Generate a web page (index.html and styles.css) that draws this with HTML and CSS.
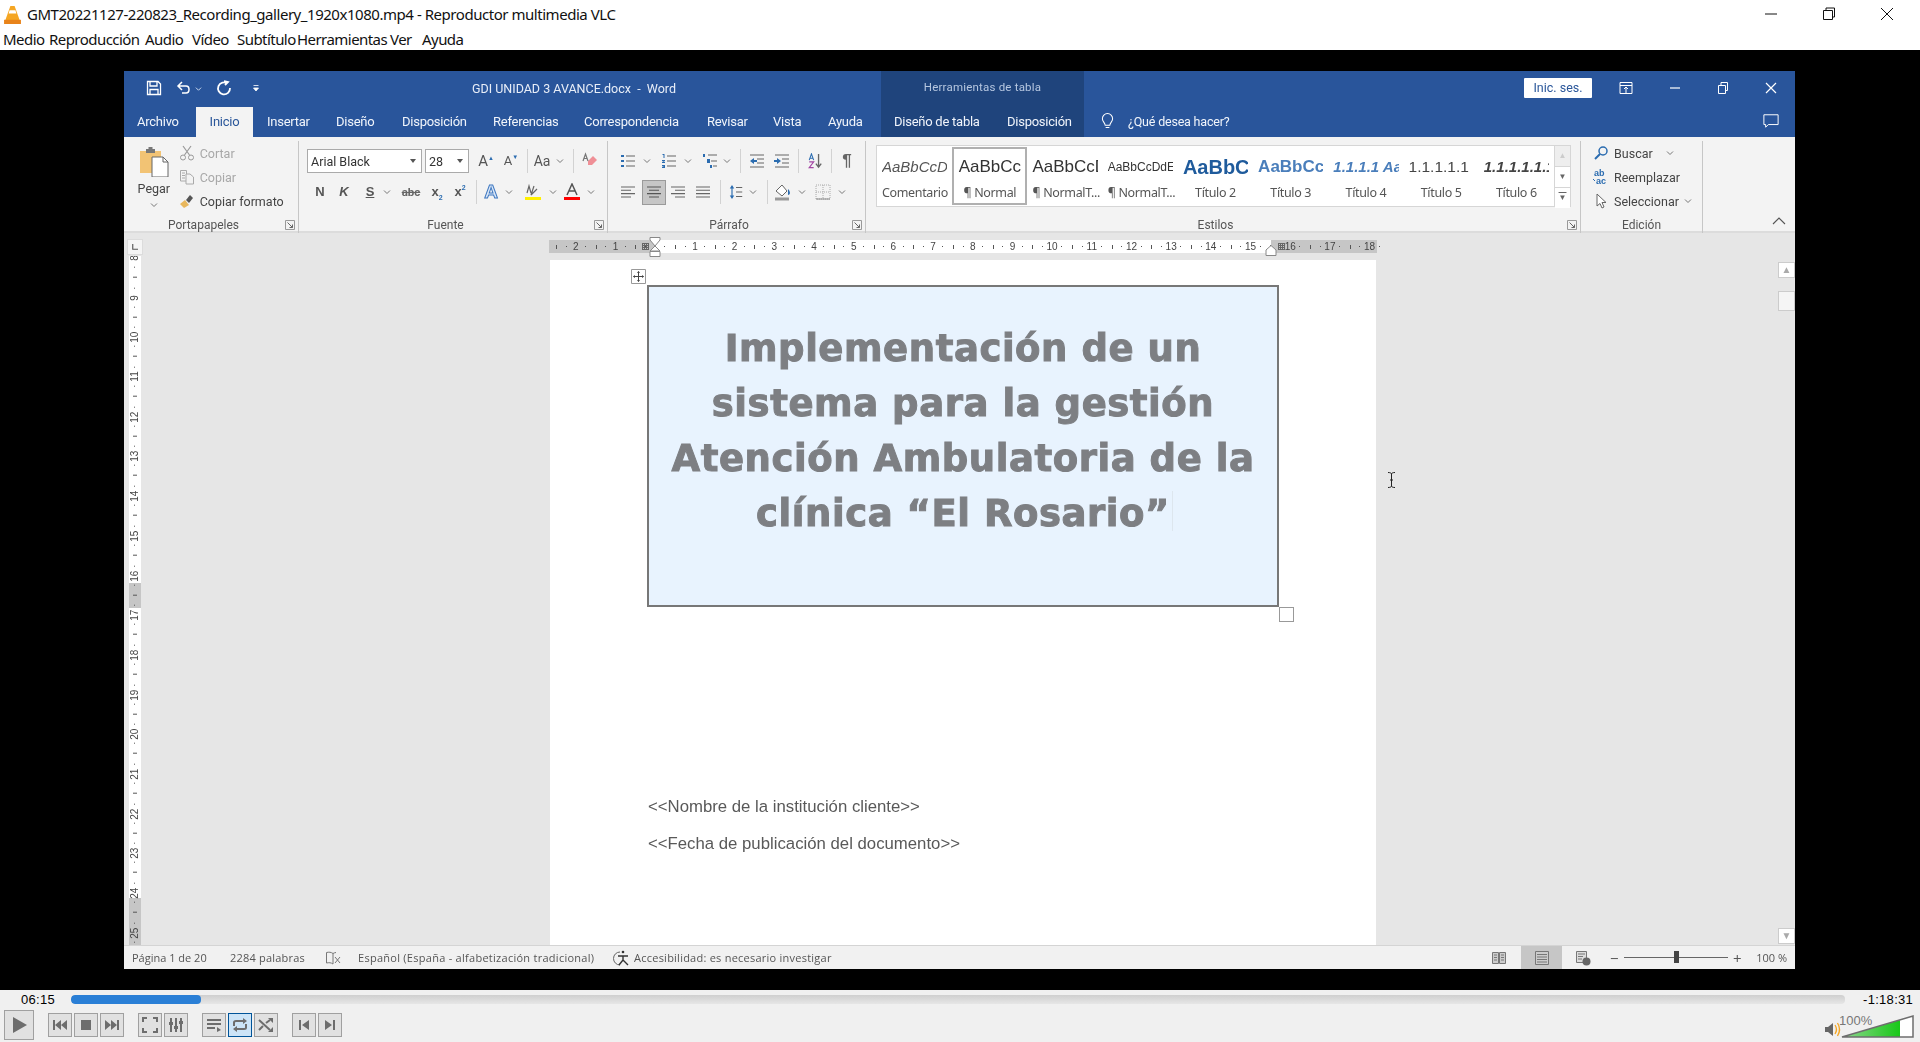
FILE: index.html
```html
<!DOCTYPE html>
<html lang="es">
<head>
<meta charset="utf-8">
<title>VLC</title>
<link rel="stylesheet" href="styles.css">
</head>
<body>
<svg class="defs" width="0" height="0">
<defs>
<symbol id="chev" viewBox="0 0 8 8"><path d="M1 2.500 4 5.500 7 2.500" fill="none" stroke="#777" stroke-width="1"/></symbol>
<symbol id="launch" viewBox="0 0 10 10"><path d="M.5 .5H9.500V9.500H.5Z" fill="none" stroke="#999"/><path d="M2.500 2.500 7.500 7.500M7.500 4.500V7.500H4.500" fill="none" stroke="#666"/></symbol>
<symbol id="bul" viewBox="0 0 16 16"><path d="M6 3H15M6 8H15M6 13H15" stroke="#666" stroke-width="1.200"/><path d="M1 2h3v2H1zM1 7h3v2H1zM1 12h3v2H1z" fill="#2b6cb0"/></symbol>
<symbol id="num" viewBox="0 0 16 16"><path d="M6 3H15M6 8H15M6 13H15" stroke="#666" stroke-width="1.200"/><path d="M1.500 1h2v4h-1V2h-1zM1 7h3v1L2.500 9H4v1H1V9l2-1H1zM1 12h3v3H1v-1h2v-.3H1.500v-.6H3V13H1z" fill="#2b6cb0"/></symbol>
<symbol id="multi" viewBox="0 0 16 16"><path d="M6 2H15M9 8H15M11 13H15" stroke="#666" stroke-width="1.100"/><path d="M1 1h2v3H1zM5 6h3v4H5zM8 12h2v3H8z" fill="#2b6cb0"/></symbol>
<symbol id="out" viewBox="0 0 16 16"><path d="M1 2H15M8 6H15M8 10H15M1 14H15" stroke="#666" stroke-width="1.200"/><path d="M1 8 5 5V7H8V9H5V11Z" fill="#2b6cb0"/></symbol>
<symbol id="ind" viewBox="0 0 16 16"><path d="M1 2H15M8 6H15M8 10H15M1 14H15" stroke="#666" stroke-width="1.200"/><path d="M7 8 3 5V7H0V9H3V11Z" fill="#2b6cb0"/></symbol>
<symbol id="sort" viewBox="0 0 16 18"><path d="M12 1V15M9 12 12 16 15 12" fill="none" stroke="#666" stroke-width="1.500"/><path d="M1.500 8 4 1 6.500 8M2.500 6H5.500" fill="none" stroke="#2b6cb0" stroke-width="1.200"/><path d="M1.500 10H6.500L1.500 16.500H6.500" fill="none" stroke="#a347a3" stroke-width="1.300"/></symbol>
<symbol id="alL" viewBox="0 0 16 16"><path d="M1 3H15M1 6.300H11M1 9.600H15M1 13H11" stroke="#666" stroke-width="1.100"/></symbol>
<symbol id="alC" viewBox="0 0 16 16"><path d="M1 3H15M3 6.300H13M1 9.600H15M3 13H13" stroke="#555" stroke-width="1.100"/></symbol>
<symbol id="alR" viewBox="0 0 16 16"><path d="M1 3H15M5 6.300H15M1 9.600H15M5 13H15" stroke="#666" stroke-width="1.100"/></symbol>
<symbol id="alJ" viewBox="0 0 16 16"><path d="M1 3H15M1 6.300H15M1 9.600H15M1 13H15" stroke="#666" stroke-width="1.100"/></symbol>
<symbol id="line" viewBox="0 0 16 18"><path d="M8 4H15M8 9H15M8 14H15" stroke="#666" stroke-width="1.200"/><path d="M3.500 3V15" stroke="#2b6cb0" stroke-width="1.300"/><path d="M1 5 3.500 1 6 5ZM1 13 3.500 17 6 13Z" fill="#2b6cb0"/></symbol>
<symbol id="shade" viewBox="0 0 18 18"><path d="M1 16H15" stroke="#999" stroke-width="3"/><path d="M2 8 8 2 13 8 8 13Z" fill="#fff" stroke="#666"/><path d="M14 6C17 9 16 12 14 12Z" fill="#2b6cb0"/></symbol>
<symbol id="border" viewBox="0 0 18 18"><path d="M2 2H16V16H2Z" fill="none" stroke="#aaa" stroke-dasharray="1 1"/><path d="M9 2V16M2 9H16" stroke="#aaa" stroke-dasharray="1 1"/><path d="M2 16H16" stroke="#888"/></symbol>
</defs>
</svg>

<header class="vtitle">
<svg class="cone" viewBox="0 0 16 18"><path d="M6 1H10L15 15H1Z" fill="#f5a623"/><path d="M5.200 5H10.800L11.600 8H4.400Z" fill="#fff"/><path d="M0 14H16V18H0Z" fill="#e8831a"/></svg>
<span class="vname">GMT20221127-220823_Recording_gallery_1920x1080.mp4 - Reproductor multimedia VLC</span>
<div class="wbtns">
<svg viewBox="0 0 14 14"><path d="M1 7H13" stroke="#111"/></svg>
<svg viewBox="0 0 14 14"><path d="M1.500 3.500H10.500V12.500H1.500ZM4 3.500V1H12.500V10H10.500" fill="none" stroke="#111"/></svg>
<svg viewBox="0 0 14 14"><path d="M1 1 13 13M13 1 1 13" stroke="#111"/></svg>
</div>
</header>
<nav class="vmenu"><span>Medio</span><span>Reproducción</span><span>Audio</span><span>Vídeo</span><span>Subtítulo</span><span>Herramientas</span><span>Ver</span><span>Ayuda</span></nav>

<main class="video">
<section class="word">
<div class="whead">
<div class="wh-left">
<div class="wtop">
<svg class="q q-save" viewBox="0 0 16 16"><path d="M1.500 1.500H12L14.500 4V14.500H1.500ZM4 1.500V6H11V1.500M4 14.500V9.500H12V14.500" fill="none" stroke="#fff" stroke-width="1.300"/></svg>
<svg class="q q-undo" viewBox="0 0 16 16"><path d="M6 2 2 6 6 10M2 6H10C14 6 14 13 10 13H6" fill="none" stroke="#fff" stroke-width="1.500"/></svg>
<svg class="q-ch" viewBox="0 0 8 8"><path d="M1 3 4 6 7 3" fill="none" stroke="#dce6f5"/></svg>
<svg class="q q-redo" viewBox="0 0 16 16"><path d="M8 1 12 2 9 5M11.500 3.500A6 6 0 1 0 14 8" fill="none" stroke="#fff" stroke-width="1.800"/></svg>
<svg class="q-more" viewBox="0 0 8 8"><path d="M1.500 1.500H6.500M1.500 4 4 7 6.500 4Z" fill="#fff" stroke="#fff" stroke-width=".8"/></svg>
<span class="docname">GDI UNIDAD 3 AVANCE.docx  -  Word</span>
</div>
<div class="tabs tabs-l">
<span class="tb t72">Archivo</span><span class="tb on">Inicio</span><span class="tb t70">Insertar</span><span class="tb t66">Diseño</span><span class="tb t91">Disposición</span><span class="tb t91">Referencias</span><span class="tb t123">Correspondencia</span><span class="tb t66">Revisar</span><span class="tb t55">Vista</span><span class="tb t66">Ayuda</span>
</div>
</div>
<div class="wh-ctx">
<div class="wtop ctx-title">Herramientas de tabla</div>
<div class="tabs"><span class="tb t113">Diseño de tabla</span><span class="tb t90">Disposición</span></div>
</div>
<div class="wh-right">
<div class="wtop wtop-r">
<span class="signin">Inic. ses.</span>
<svg class="wc" viewBox="0 0 16 16"><path d="M2 2.500H14V13.500H2ZM2 5.500H14M8 13V7M6 9 8 7 10 9" fill="none" stroke="#fff"/></svg>
<svg class="wc" viewBox="0 0 16 16"><path d="M3 8H13" stroke="#fff" stroke-width="1.200"/></svg>
<svg class="wc" viewBox="0 0 16 16"><path d="M3.500 5.500H10.500V13.500H3.500ZM6 5.500V2.500H12.500V10.500H10.500" fill="none" stroke="#fff"/></svg>
<svg class="wc" viewBox="0 0 16 16"><path d="M3 3 13 13M13 3 3 13" stroke="#fff" stroke-width="1.200"/></svg>
</div>
<div class="tabs tabs-r">
<svg class="bulb" viewBox="0 0 14 18"><path d="M4.500 13C4 10 1.500 9 1.500 6A5.500 5.500 0 0 1 12.500 6C12.500 9 10 10 9.500 13ZM5 15.500H9" fill="none" stroke="#fff" stroke-width="1.100"/></svg>
<span class="tell">¿Qué desea hacer?</span>
<svg class="cmt" viewBox="0 0 18 18"><path d="M1 2H17V13H6L3 16V13H1Z" fill="none" stroke="#fff" stroke-width="1.100"/></svg>
</div>
</div>
</div>

<div class="ribbon">
<div class="grp g-clip">
<div class="gbody clip">
<div class="paste">
<svg class="pasteic" viewBox="0 0 30 30"><path d="M1 4H22V26H1Z" fill="#f2c374"/><path d="M7 2H16V6H7Z" fill="#777"/><path d="M9.500 0H13.500V3H9.500Z" fill="#777"/><path d="M13 10H24L29 15V30H13Z" fill="#fff" stroke="#666"/><path d="M24 10V15H29" fill="none" stroke="#666"/></svg>
<span>Pegar</span>
<svg class="ch" viewBox="0 0 8 8"><use href="#chev"/></svg>
</div>
<div class="stack">
<div class="cmd off"><svg viewBox="0 0 16 16"><path d="M4 1 10.500 10M12 1 5.500 10" stroke="#999" fill="none" stroke-width="1.200"/><circle cx="4" cy="12.500" r="2.500" fill="none" stroke="#999"/><circle cx="12" cy="12.500" r="2.500" fill="none" stroke="#999"/></svg><span>Cortar</span></div>
<div class="cmd off"><svg viewBox="0 0 16 16"><path d="M1.500 1.500H7.500V12H1.500ZM3 4H6M3 6.500H6M3 9H6" stroke="#aaa" fill="none"/><path d="M7 5H11L14.500 8V15H7Z" fill="#f3f3f3" stroke="#aaa"/></svg><span>Copiar</span></div>
<div class="cmd"><svg viewBox="0 0 16 16"><path d="M1 11 6 7 10 12 5 15Z" fill="#e8b75c"/><path d="M7 7 11 2 14 5 10 10Z" fill="#555"/></svg><span>Copiar formato</span></div>
</div>
</div>
<div class="glabel"><i></i><span>Portapapeles</span><svg class="lau" viewBox="0 0 10 10"><use href="#launch"/></svg></div>
</div>

<div class="grp g-font">
<div class="gbody tools">
<div class="row">
<div class="combo c115"><span>Arial Black</span><b></b></div><i class="w3"></i>
<div class="combo c44"><span>28</span><b></b></div>
<i class="w2"></i><span class="s w30 big">A<sup>▲</sup></span><span class="s w20 mid">A<sup>▼</sup></span><i class="w6"></i><i class="sep"></i><span class="s w28 aa">Aa</span><svg class="ch" viewBox="0 0 8 8"><use href="#chev"/></svg><i class="w9"></i><i class="sep"></i>
<svg class="ic18 m6" viewBox="0 0 18 18"><path d="M8 9 13 4 17 8 12 13H8Z" fill="#ef8f96"/><path d="M3 9 5.500 2 8 9M4 6.500H7" fill="none" stroke="#777" stroke-width="1.200"/></svg>
</div>
<div class="row">
<i class="w2"></i><span class="s w22 tb-b">N</span><span class="s w26 tb-b it">K</span><span class="s w26 tb-b un">S</span><svg class="ch" viewBox="0 0 8 8"><use href="#chev"/></svg><i class="w4"></i>
<span class="s w32 abc">abc</span><span class="s w20 tb-b x">x<sub>2</sub></span><span class="s w26 tb-b x">x<sup>2</sup></span><i class="w3"></i><i class="sep"></i>
<span class="s w28 fx">A</span><svg class="ch" viewBox="0 0 8 8"><use href="#chev"/></svg><i class="w2"></i>
<i class="w2"></i><svg class="w32 ic18h" viewBox="0 0 18 18"><path d="M3 10 5 3 7 10M10 3 7 12 13 6" fill="none" stroke="#666" stroke-width="1.200"/><path d="M1 14H17V17H1Z" fill="#fff000"/></svg><svg class="ch" viewBox="0 0 8 8"><use href="#chev"/></svg>
<svg class="w30 ic18h" viewBox="0 0 18 18"><path d="M4 12 9 1 14 12M6 8H12" fill="none" stroke="#555" stroke-width="1.500"/><path d="M1 14H17V17H1Z" fill="#f00"/></svg><svg class="ch" viewBox="0 0 8 8"><use href="#chev"/></svg>
</div>
</div>
<div class="glabel"><i></i><span>Fuente</span><svg class="lau" viewBox="0 0 10 10"><use href="#launch"/></svg></div>
</div>

<div class="grp g-para">
<div class="gbody tools">
<div class="row">
<i class="w12"></i><svg class="ic" viewBox="0 0 16 16"><use href="#bul"/></svg><i class="w7"></i><svg class="ch" viewBox="0 0 8 8"><use href="#chev"/></svg>
<i class="w10"></i><svg class="ic" viewBox="0 0 16 16"><use href="#num"/></svg><i class="w7"></i><svg class="ch" viewBox="0 0 8 8"><use href="#chev"/></svg>
<i class="w10"></i><svg class="ic" viewBox="0 0 16 16"><use href="#multi"/></svg><i class="w5"></i><svg class="ch" viewBox="0 0 8 8"><use href="#chev"/></svg>
<i class="w9"></i><i class="sep"></i><i class="w8"></i><svg class="ic" viewBox="0 0 16 16"><use href="#out"/></svg><i class="w9"></i><svg class="ic" viewBox="0 0 16 16"><use href="#ind"/></svg>
<i class="w8"></i><i class="sep"></i><i class="w8"></i><svg class="ic" viewBox="0 0 16 18"><use href="#sort"/></svg><i class="w8"></i><i class="sep"></i>
<span class="s w30 pil">¶</span>
</div>
<div class="row">
<i class="w12"></i><svg class="ic" viewBox="0 0 16 16"><use href="#alL"/></svg><i class="w6"></i><span class="active"><svg class="ic" viewBox="0 0 16 16"><use href="#alC"/></svg></span>
<i class="w4"></i><svg class="ic" viewBox="0 0 16 16"><use href="#alR"/></svg><i class="w9"></i><svg class="ic" viewBox="0 0 16 16"><use href="#alJ"/></svg>
<i class="w9"></i><i class="sep"></i><i class="w7"></i><svg class="ic" viewBox="0 0 16 18"><use href="#line"/></svg><i class="w5"></i><svg class="ch" viewBox="0 0 8 8"><use href="#chev"/></svg>
<i class="w10"></i><i class="sep"></i><i class="w6"></i><svg class="ic18" viewBox="0 0 18 18"><use href="#shade"/></svg><i class="w6"></i><svg class="ch" viewBox="0 0 8 8"><use href="#chev"/></svg>
<i class="w8"></i><svg class="ic18" viewBox="0 0 18 18"><use href="#border"/></svg><i class="w6"></i><svg class="ch" viewBox="0 0 8 8"><use href="#chev"/></svg>
</div>
</div>
<div class="glabel"><i></i><span>Párrafo</span><svg class="lau" viewBox="0 0 10 10"><use href="#launch"/></svg></div>
</div>

<div class="grp g-styles">
<div class="gbody gal-wrap">
<div class="gallery">
<div class="gitems">
<div class="gi"><p class="p-com">AaBbCcDd</p><span>Comentario</span></div>
<div class="gi sel"><p class="p-nor">AaBbCc</p><span>¶ Normal</span></div>
<div class="gi"><p class="p-nor">AaBbCcDd</p><span>¶ NormalT...</span></div>
<div class="gi"><p class="p-sm">AaBbCcDdE</p><span>¶ NormalT...</span></div>
<div class="gi"><p class="p-t2">AaBbCc</p><span>Título 2</span></div>
<div class="gi"><p class="p-t3">AaBbCcD</p><span>Título 3</span></div>
<div class="gi"><p class="p-t4">1.1.1.1 AaB</p><span>Título 4</span></div>
<div class="gi"><p class="p-t5">1.1.1.1.1</p><span>Título 5</span></div>
<div class="gi"><p class="p-t6">1.1.1.1.1.1</p><span>Título 6</span></div>
</div>
<div class="gscroll"><span class="dis">▲</span><span>▼</span><span class="more">▼</span></div>
</div>
</div>
<div class="glabel"><i></i><span>Estilos</span><svg class="lau" viewBox="0 0 10 10"><use href="#launch"/></svg></div>
</div>

<div class="grp g-edit">
<div class="gbody stack-e">
<div class="cmd"><svg viewBox="0 0 16 16"><circle cx="10" cy="6" r="4" fill="none" stroke="#2b6cb0" stroke-width="1.500"/><path d="M7 9 2 14" stroke="#2b6cb0" stroke-width="2"/></svg><span>Buscar</span><svg class="ch chm" viewBox="0 0 8 8"><use href="#chev"/></svg></div>
<div class="cmd"><svg viewBox="0 0 16 16"><text x="1" y="7" class="ab">ab</text><text x="3" y="15" class="ac">ac</text><path d="M0 10 2 12" stroke="#2b6cb0"/></svg><span>Reemplazar</span></div>
<div class="cmd"><svg viewBox="0 0 16 16"><path d="M4 1V13L7 10.500 9 15 11 14 9 9.500H13Z" fill="#fff" stroke="#666"/></svg><span>Seleccionar</span><svg class="ch" viewBox="0 0 8 8"><use href="#chev"/></svg></div>
</div>
<div class="glabel glabel-e"><span>Edición</span></div>
</div>

<div class="rib-end"><svg viewBox="0 0 14 8"><path d="M1 7 7 1 13 7" fill="none" stroke="#555" stroke-width="1.100"/></svg></div>
</div>

<div class="doc">
<aside class="vside">
<div class="corner"><svg viewBox="0 0 8 8"><path d="M1 0V7H8" fill="none" stroke="#555" stroke-width="1.500"/></svg></div>
<div class="vr">
<span>8</span><span>9</span><span>10</span><span>11</span><span>12</span><span>13</span><span>14</span><span>15</span><span>16</span><span>17</span><span>18</span><span>19</span><span>20</span><span>21</span><span>22</span><span>23</span><span>24</span><span>25</span>
</div>
</aside>
<div class="pagecol">
<div class="hr">
<span>2</span><span>1</span><span></span><span>1</span><span>2</span><span>3</span><span>4</span><span>5</span><span>6</span><span>7</span><span>8</span><span>9</span><span>10</span><span>11</span><span>12</span><span>13</span><span>14</span><span>15</span><span>16</span><span>17</span><span>18</span>
<i class="tcol tcol-l"></i><i class="tcol tcol-r"></i>
<svg class="indent" viewBox="0 0 12 20"><path d="M1 .5H11V3L6 9 1 3ZM6 9 11 14H1Z" fill="#fff" stroke="#888"/><path d="M1 14.500H11V19.500H1Z" fill="#fff" stroke="#888"/></svg>
<svg class="rindent" viewBox="0 0 12 11"><path d="M6 .5 11 5V10.500H1V5Z" fill="#fff" stroke="#888"/></svg>
</div>
<article class="page">
<div class="titlebox">
<svg class="mv" viewBox="0 0 15 15"><path d="M.5 .5H14.500V14.500H.5Z" fill="#fff" stroke="#999"/><path d="M7.500 2.500V12.500M2.500 7.500H12.500" stroke="#444"/><path d="M6 4 7.500 2 9 4ZM6 11 7.500 13 9 11ZM4 6 2 7.500 4 9ZM11 6 13 7.500 11 9Z" fill="#444"/></svg>
<h1>Implementación de un<br>sistema para la gestión<br>Atención Ambulatoria de la<br>clínica “El Rosario”</h1>
<i class="caret"></i>
<i class="rs"></i>
</div>
<p class="ph ph1">&lt;&lt;Nombre de la institución cliente&gt;&gt;</p>
<p class="ph">&lt;&lt;Fecha de publicación del documento&gt;&gt;</p>
<svg class="ibeam" viewBox="0 0 9 16"><path d="M1 .5C3 .5 4.500 1 4.500 2V14C4.500 15 3 15.500 1 15.500M8 .5C6 .5 4.500 1 4.500 2M4.500 14C4.500 15 6 15.500 8 15.500M3 8H6" fill="none" stroke="#222"/></svg>
</article>
</div>
<aside class="vscroll">
<div class="sb-top">
<span class="sbtn">▲</span>
<span class="sthumb"></span>
</div>
<span class="sbtn">▼</span>
</aside>
</div>

<footer class="status">
<span class="st1">Página 1 de 20</span><span class="st2">2284 palabras</span>
<svg class="st-book" viewBox="0 0 16 16"><path d="M1.500 2.500C4 2 6 2 8 3.500V14C6 12.500 4 12.500 1.500 13ZM8 3.500C9 3 10 2.500 11 2.500" fill="none" stroke="#777"/><path d="M10 7 15 13M15 7 10 13" stroke="#777"/></svg>
<span class="st3">Español (España - alfabetización tradicional)</span>
<svg class="st-acc" viewBox="0 0 18 16"><path d="M7 2A6.500 6.500 0 1 0 7 15" fill="none" stroke="#666"/><circle cx="10" cy="2" r="1.300" fill="#333"/><path d="M5 6H15M10 6V10M10 10 6 15M10 10 15 15" stroke="#333" stroke-width="1.400"/></svg>
<span class="st4">Accesibilidad: es necesario investigar</span>
<div class="st-right">
<svg class="sv" viewBox="0 0 16 16"><path d="M1.500 2.500H7.500V13.500H1.500ZM8.500 2.500H14.500V13.500H8.500Z" fill="#ccc" stroke="#777"/><path d="M3 5H6M3 7.500H6M3 10H6M10 5H13M10 7.500H13M10 10H13" stroke="#777"/></svg>
<span class="view-on"><svg class="sv" viewBox="0 0 16 16"><path d="M1.500 1.500H14.500V14.500H1.500Z" fill="#ccc" stroke="#777"/><path d="M3 4.500H13M3 7H13M3 9.500H13M3 12H13" stroke="#777"/></svg></span>
<svg class="sv web" viewBox="0 0 16 16"><path d="M1.500 1.500H11.500V12.500H1.500Z" fill="#ddd" stroke="#777"/><path d="M3 4H10M3 6.500H8M3 9H7" stroke="#777"/><circle cx="11.500" cy="11.500" r="4" fill="#666"/></svg>
<span class="zm">−</span>
<span class="zline"><i></i></span>
<span class="zm">+</span>
<span class="zpct">100 %</span>
</div>
</footer>
</section>
</main>

<footer class="ctrl">
<div class="seek">
<span class="t-cur">06:15</span>
<div class="track"><i></i></div>
<span class="t-rem">-1:18:31</span>
</div>
<div class="btns">
<button class="b play"><svg viewBox="0 0 20 20"><path d="M4 2 18 10 4 18Z" fill="#6d6d6d"/></svg></button>
<div class="vg">
<button class="b"><svg viewBox="0 0 16 16"><path d="M1 3H3V13H1ZM9 3V13L3 8ZM15 3V13L9 8Z" fill="#6d6d6d"/></svg></button>
<button class="b"><svg viewBox="0 0 16 16"><path d="M3 3H13V13H3Z" fill="#6d6d6d"/></svg></button>
<button class="b"><svg viewBox="0 0 16 16"><path d="M1 3 7 8 1 13ZM7 3 13 8 7 13ZM13 3H15V13H13Z" fill="#6d6d6d"/></svg></button>
</div>
<div class="vg">
<button class="b"><svg viewBox="0 0 16 16"><path d="M1 5V1H5M11 1H15V5M15 11V15H11M5 15H1V11" fill="none" stroke="#6d6d6d" stroke-width="2"/></svg></button>
<button class="b"><svg viewBox="0 0 16 16"><path d="M3 1V15M8 1V15M13 1V15" stroke="#6d6d6d" stroke-width="2"/><path d="M1 5H5V8H1ZM6 9H10V12H6ZM11 4H15V7H11Z" fill="#6d6d6d"/></svg></button>
</div>
<div class="vg">
<button class="b"><svg viewBox="0 0 16 16"><path d="M1 3H15M1 7H15M1 11H9" stroke="#6d6d6d" stroke-width="2"/><path d="M11 10 15 13 11 15Z" fill="#6d6d6d"/></svg></button>
<button class="b loop"><svg viewBox="0 0 16 16"><path d="M2 9V5.500C2 4.500 3 4 4 4H12M14 7V10.500C14 11.500 13 12 12 12H4" fill="none" stroke="#6d6d6d" stroke-width="2"/><path d="M11 1 15 4 11 7ZM5 9 1 12 5 15Z" fill="#6d6d6d"/></svg></button>
<button class="b"><svg viewBox="0 0 16 16"><path d="M1 3 12 13M1 13 5 9M8 6 12 3" fill="none" stroke="#6d6d6d" stroke-width="2"/><path d="M10 1H15V6ZM10 15H15V10Z" fill="#6d6d6d"/></svg></button>
</div>
<div class="vg">
<button class="b"><svg viewBox="0 0 16 16"><path d="M3 3H5V13H3ZM13 3V13L6 8Z" fill="#6d6d6d"/></svg></button>
<button class="b"><svg viewBox="0 0 16 16"><path d="M3 3 10 8 3 13ZM11 3H13V13H11Z" fill="#6d6d6d"/></svg></button>
</div>
<svg class="vol" viewBox="0 0 92 26">
<defs><linearGradient id="vg" x1="0" x2="1" y1="0" y2="0"><stop offset="0" stop-color="#8fd68f"/><stop offset="1" stop-color="#18c818"/></linearGradient></defs>
<path d="M2 14H5L10 10V23L5 19H2Z" fill="#666"/><path d="M12 12C14 15 14 18 12 21M14.500 10C17 14 17 19 14.500 23" fill="none" stroke="#f5a623" stroke-width="1.300"/>
<path d="M19 24 90 3V24Z" fill="#fff"/><path d="M19 24 77 7V24Z" fill="url(#vg)"/><path d="M19 24 90 3V24Z" fill="none" stroke="#6d6d6d" stroke-width="1.500"/>
<text x="16" y="12" class="vt">100%</text>
</svg>
</div>
</footer>
</body>
</html>
```
FILE: styles.css
```css
*{box-sizing:border-box}
html,body{margin:0;height:100%}
body{width:1920px;height:1042px;overflow:hidden;background:#000;display:flex;flex-direction:column;font-family:"Noto Sans","Liberation Sans",sans-serif}
.defs{position:absolute}
i{display:block;flex:none}
svg{flex:none;display:block}

/* VLC chrome */
.vtitle{height:28px;background:#fff;display:flex;align-items:center;padding-left:4px}
.cone{width:17px;height:19px;margin-right:6px}
.vname{font:15px/28px "Noto Sans",sans-serif;color:#111;letter-spacing:-.46px;white-space:nowrap}
.wbtns{margin-left:auto;padding-right:4px;display:flex}
.wbtns svg{width:58px;height:14px}
.vmenu{height:22px;background:#fff;display:grid;grid-template-columns:46px 96px 47px 45px 60px 93px 32px auto;padding:1px 0 0 3px;font:15px/20px "Noto Sans",sans-serif;letter-spacing:-.55px;color:#111}
.video{flex:1;min-height:0;padding:21px 0 0 124px}

/* Word */
.word{width:1671px;height:898px;background:#f3f3f3;display:flex;flex-direction:column;filter:blur(.3px);font-family:Roboto,"Noto Sans",sans-serif;color:#444}
.whead{height:66px;background:#29559b;display:flex;color:#fff;flex:none}
.wh-left{width:757px}
.wh-ctx{width:203px;background:#1f447c}
.wh-right{flex:1;min-width:0}
.wtop{height:34px;display:flex;align-items:center}
.q{width:16px;height:16px}
.q-save{margin-left:22px}
.q-undo{margin-left:14px}
.q-ch{width:7px;height:7px;margin-left:3px}
.q-redo{margin-left:14px}
.q-more{width:8px;height:8px;margin-left:20px}
.docname{font-size:12.5px;margin-left:212px;white-space:pre;color:#e8eef8}
.ctx-title{justify-content:center;font-size:11.5px;color:#b6c7e0;letter-spacing:.2px;padding-bottom:2px}
.wtop-r{padding-left:440px}
.signin{width:68px;height:20px;background:#fff;color:#2b579a;font-size:12.5px;line-height:20px;text-align:center;border-radius:1px}
.wc{width:16px;height:16px}
.signin + .wc{margin-left:26px}
.wc + .wc{margin-left:32px}
.wc:nth-of-type(2){margin-left:33px}
.tabs{height:32px;display:flex;font-size:13px;line-height:33px;letter-spacing:-.25px}
.tb{display:block;padding-left:13px;white-space:nowrap;color:#f1f5fb}
.t72{width:72px}.t70{width:70px;padding-left:14px}.t66{width:66px}.t91{width:91px}.t123{width:123px}.t55{width:55px}.t113{width:113px}.t90{width:90px}
.tb.on{width:57px;padding:0;text-align:center;background:#f3f3f3;color:#2b579a;height:30px;margin-top:2px;line-height:29px}
.tabs-r{align-items:center;padding-left:17px}
.bulb{width:13px;height:17px}
.tell{margin-left:14px;font-size:12.5px;color:#f1f5fb;letter-spacing:-.2px}
.cmt{width:18px;height:16px;margin-left:auto;margin-right:15px}

/* ribbon */
.ribbon{height:96px;flex:none;display:flex;background:#f3f3f3;border-bottom:2px solid #dcdcdc;font-size:12.5px}
.grp{display:flex;flex-direction:column;height:92px;margin-top:4px;border-right:1px solid #c6c6c6}
.gbody{height:76px;flex:none}
.glabel{display:grid;grid-template-columns:1fr auto 1fr;align-items:center;height:16px;padding-right:3px;color:#555;font-size:12px}
.glabel span{padding-right:12px}
.lau{width:10px;height:10px;justify-self:end}
.g-clip{width:175px}.g-font{width:309px}.g-para{width:258px}.g-styles{width:715px}.g-edit{width:122px}
.clip{display:flex;padding-left:5px}
.paste{width:50px;display:flex;flex-direction:column;align-items:center;padding-top:6px}
.pasteic{width:30px;height:30px}
.paste span{line-height:24px;color:#444}
.ch{width:8px;height:8px;align-self:center}
.stack{width:120px}
.cmd{height:24px;display:flex;align-items:center;gap:5px;white-space:nowrap;color:#444}
.cmd>svg:first-child{width:16px;height:16px}
.off{color:#a8a8a8}
.stack-e{padding-left:12px}
.chm{margin-left:8px}
.tools{padding:8px 0 0;display:flex;flex-direction:column;gap:7px}
.g-font .tools{padding-left:8px}
.row{height:24px;display:flex;align-items:center}
.combo{height:24px;background:#fff;border:1px solid #aaa;display:flex;align-items:center;justify-content:space-between;padding:0 5px 0 3px;font-size:12.5px;color:#333}
.combo b{width:0;height:0;border:3px solid transparent;border-top:4px solid #555;border-bottom:0}
.c115{width:115px}.c44{width:44px}
.w2{width:2px}.w3{width:3px}.w4{width:4px}.w5{width:5px}.w6{width:6px}.w7{width:7px}.w8{width:8px}.w9{width:9px}.w10{width:10px}.w12{width:12px}
.w20{width:20px}.w22{width:22px}.w26{width:26px}.w28{width:28px}.w30{width:30px}.w32{width:32px}
.s{display:block;text-align:center;flex:none;color:#555;line-height:24px}
.sep{width:1px;height:24px;background:#d2d2d2}
.big{font-size:15px}.mid{font-size:13px}
.s sup{font-size:6px;color:#2b6cb0;vertical-align:6px;line-height:0}
.aa{font-size:14px}
.tb-b{font-weight:700;font-size:13px;font-family:"Liberation Sans",sans-serif;color:#555}
.it{font-style:italic}.un{text-decoration:underline}
.tb-b sub,.tb-b sup{font-size:7px;line-height:0;color:#2b6cb0}
.abc{font-size:11.5px;text-decoration:line-through;font-weight:700;color:#666}
.fx{font:700 19px/24px "Liberation Sans",sans-serif;color:#dbe8f8;-webkit-text-stroke:1px #3f78c0}
.ic{width:16px;height:16px}
.ic18{width:18px;height:18px}
.ic18h{height:18px}
.m6{margin-left:6px}
.pil{font:700 17px/24px "Liberation Sans",sans-serif;color:#666}
.active{width:24px;height:25px;background:#c6c6c6;border:1px solid #9a9a9a;display:flex;align-items:center;justify-content:center;flex:none}

/* style gallery */
.gal-wrap{padding:4px 0 0 10px}
.gallery{width:695px;height:62px;background:#fff;border:1px solid #d6d6d6;display:flex}
.gitems{width:678px;display:grid;grid-template-columns:repeat(9,1fr)}
.gi{padding:7px 5px 0;text-align:center;overflow:hidden;white-space:nowrap;font-size:12.5px;color:#555;font-family:"Noto Sans",sans-serif;letter-spacing:-.35px}
.gi p{margin:0;height:28px;overflow:hidden;font:17px/28px "Liberation Sans",sans-serif;color:#333;letter-spacing:0}
.gi span{display:block;line-height:20px;margin-top:2px}
.sel{box-shadow:inset 0 0 0 2px #b0b0b0,inset 0 0 0 3px #fff;margin:1px 0;padding-top:6px}
.gi .p-com{font-style:italic;font-size:15px;text-align:left;color:#555}
.gi .p-sm{font-size:12px}
.gi .p-nor{text-align:left}
.sel .p-nor.p-nor{text-align:center}
.gi .p-t2{font-weight:700;font-size:20px;color:#1f5b9c;text-align:left}
.gi .p-t3{font-weight:700;font-size:17px;color:#4a7ebb;text-align:left}
.gi .p-t4{font-weight:700;font-style:italic;font-size:15px;color:#4a7ebb;text-align:left}
.gi .p-t5{font-size:15.5px;color:#444;text-align:left}
.gi .p-t6{font-weight:700;font-style:italic;font-size:15px;color:#444;text-align:left}
.gscroll{width:16px;border-left:1px solid #d6d6d6;display:grid;grid-template-rows:1fr 1fr 1fr;font-size:8px;color:#666;text-align:center;line-height:20px}
.gscroll span{border-bottom:1px solid #d6d6d6;background:#fff}
.gscroll .dis{background:#eee;color:#ccc}
.gscroll .more{border-bottom:0;text-decoration:overline}
.glabel-e{grid-template-columns:1fr;justify-items:center;padding:0}
.glabel-e span{padding:0}
.rib-end{flex:1;display:flex;justify-content:flex-end;align-items:flex-end;padding:0 9px 6px 0}
.rib-end svg{width:14px;height:8px}

/* document */
.doc{flex:1;min-height:0;display:flex;background:#e6e6e6;position:relative}
.vside{width:426px;padding:6px 0 0 3px;display:flex;flex-direction:column}
.corner{width:16px;height:16px;background:#f5f5f5;border:1px solid #dcdcdc;padding:4px}
.vr{width:12px;margin:1px 0 0 2px;flex:1;min-height:0;overflow:hidden;background:linear-gradient(#fff 327px,#c6c6c6 327px,#c6c6c6 352px,#fff 352px,#fff 642px,#c6c6c6 642px)}
.vr span{display:block;height:39.7px;width:12px;writing-mode:vertical-rl;transform:rotate(180deg);text-align:center;font:10px/12px "Liberation Sans",sans-serif;color:#444;background:linear-gradient(#555,#555) 50% 25%/1px 1px no-repeat,linear-gradient(#555,#555) 50% 75%/1px 1px no-repeat,linear-gradient(#555,#555) 50% 0/4px 1px no-repeat}
.vr span:first-child{margin-top:-18px}
.pagecol{width:826px;padding-top:7px;display:flex;flex-direction:column}
.hr{height:13px;margin-left:-1px;width:828px;padding-left:7px;display:flex;position:relative;background:linear-gradient(90deg,#c6c6c6 106px,#fff 106px,#fff 722px,#c6c6c6 722px);font:10px/13px "Liberation Sans",sans-serif;color:#444}
.hr span{display:block;flex:none;width:39.7px;text-align:center;background:linear-gradient(#555,#555) 25% 50%/1px 1px no-repeat,linear-gradient(#555,#555) 75% 50%/1px 1px no-repeat,linear-gradient(#555,#555) 0 50%/1px 4px no-repeat}
.tcol{position:absolute;top:3px;width:7px;height:7px;background:repeating-linear-gradient(90deg,#666 0 1px,transparent 1px 2px),repeating-linear-gradient(#666 0 1px,transparent 1px 2px)}
.tcol-l{left:93px}
.tcol-r{left:729px}
.indent{position:absolute;left:100px;top:-3px;width:12px;height:20px}
.rindent{position:absolute;left:716px;top:5px;width:12px;height:11px}
.page{flex:1;min-height:0;margin-top:7px;background:#fff;padding:25px 0 0 97px;position:relative}
.titlebox{width:632px;height:322px;background:#e8f3fe;border:2px solid #777;padding-top:34px;position:relative}
.titlebox h1{margin:0;text-align:center;font:700 37px/55px "DejaVu Sans",sans-serif;color:#7d7f83;letter-spacing:.55px;-webkit-text-stroke:1px #7d7f83;white-space:nowrap}
.caret{position:absolute;left:523px;top:204px;width:1px;height:40px;background:#dde6ee}
.mv{position:absolute;left:-18px;top:-18px;width:15px;height:15px}
.rs{position:absolute;right:-17px;bottom:-17px;width:15px;height:15px;background:#fff;border:1px solid #999}
.ph{margin:0 0 0 1px;font:16.75px/36.5px "Liberation Sans",sans-serif;color:#595959}
.ph1{margin-top:182px}
.ibeam{position:absolute;left:837px;top:212px;width:9px;height:16px}
.vscroll{flex:1;min-width:0;display:flex;flex-direction:column;justify-content:space-between;align-items:flex-end;padding:29px 0 1px}
.sb-top{display:flex;flex-direction:column;gap:13px}
.sbtn{width:17px;height:16px;background:#fff;border:1px solid #ccc;color:#aaa;font-size:10px;line-height:14px;text-align:center;display:block}
.sthumb{width:17px;height:20px;background:#f5f5f5;border:1px solid #ccc;display:block}

/* status */
.status{height:24px;flex:none;background:#f1f1f1;border-top:1px solid #d4d4d4;display:flex;align-items:center;font:11px/22px "Open Sans","Noto Sans",sans-serif;color:#555;white-space:nowrap}
.st1{margin-left:8px;width:98px}
.st2{width:95px;letter-spacing:.2px}
.st-book{width:16px;height:16px;margin-right:17px}
.st3{width:255px;letter-spacing:.27px}
.st-acc{width:18px;height:16px;margin-right:3px}
.st4{letter-spacing:.24px}
.st-right{margin-left:auto;display:flex;align-items:center;height:23px;padding-right:8px}
.sv{width:16px;height:16px}
.view-on{width:41px;height:23px;background:#c6c6c6;display:flex;align-items:center;justify-content:center;margin-left:14px}
.web{margin-left:13px}
.zm{font-size:15px;width:12px;text-align:center;margin-left:17px}
.zline{width:104px;height:1px;background:#666;position:relative;margin:0 -2px 0 4px;display:block}
.zline i{position:absolute;left:50px;top:-6px;width:5px;height:12px;background:#444}
.zline + .zm{margin-left:5px}
.zpct{margin-left:13px}

/* controls */
.ctrl{height:52px;background:#f0f0f0;flex:none;color:#000}
.seek{height:20px;display:flex;align-items:center;font:13px/18px "Liberation Sans",sans-serif;letter-spacing:.3px;padding-bottom:1px}
.t-cur{width:71px;padding-left:21px}
.track{width:1774px;height:9px;background:linear-gradient(#cfcfcf,#e6e6e6);border-radius:4px;overflow:hidden}
.track i{width:130px;height:9px;background:#2a7fd6;border-radius:4px}
.t-rem{margin-left:18px}
.btns{display:flex;padding-left:4px;align-items:flex-start}
.vg{display:flex;gap:2px;margin-left:14px;padding-top:3px}
.b{width:24px;height:24px;padding:3px;border:1px solid #a0a0a0;background:#e1e1e1;display:block}
.b svg{width:100%;height:100%}
.play{width:30px;height:30px;padding:4px}
.loop{background:#cce4f7;border-color:#005499}
.vol{width:92px;height:26px;margin-left:auto;margin-right:5px;margin-top:3px}
.vt{font:13px "Liberation Sans",sans-serif;fill:#777}
.ab{font:700 9px "Liberation Sans",sans-serif;fill:#2b6cb0}
.ac{font:700 9px "Liberation Sans",sans-serif;fill:#2b6cb0}
```
